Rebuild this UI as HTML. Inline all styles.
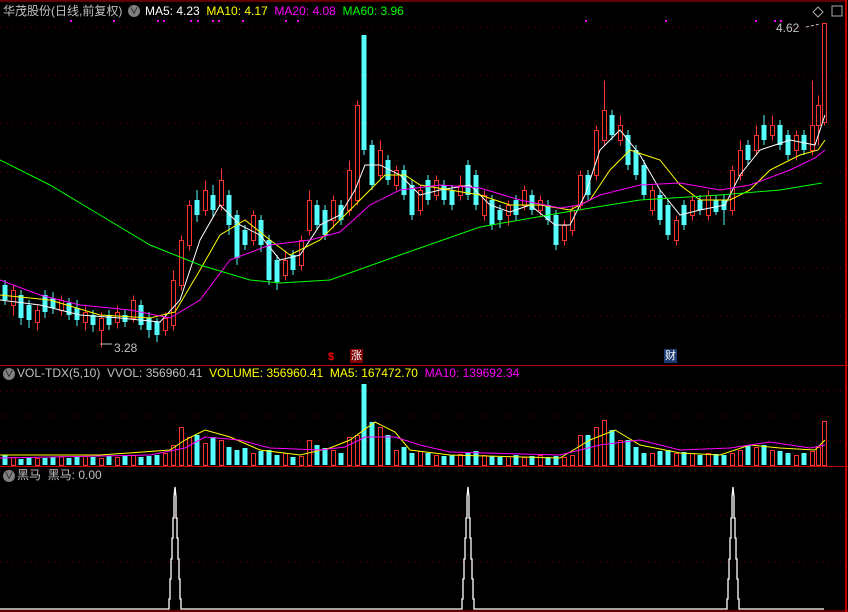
<!DOCTYPE html><html><head><meta charset="utf-8"><style>
body{margin:0;background:#000;width:848px;height:612px;overflow:hidden;font-family:"Liberation Sans","Noto Sans CJK SC",sans-serif}
svg{position:absolute;left:0;top:0}
.t{position:absolute;font-size:12px;white-space:nowrap;line-height:14px}
.b{position:absolute;width:12px;height:12px;border-radius:6px;background:#808080;color:#000;font-size:9px;text-align:center;line-height:12px}
</style></head><body>
<svg width="848" height="612" xmlns="http://www.w3.org/2000/svg">
<g stroke="#800000" stroke-dasharray="1 5">
<line x1="0" y1="27" x2="845" y2="27"/><line x1="0" y1="75" x2="845" y2="75"/><line x1="0" y1="123" x2="845" y2="123"/><line x1="0" y1="172" x2="845" y2="172"/><line x1="0" y1="220" x2="845" y2="220"/><line x1="0" y1="268" x2="845" y2="268"/><line x1="0" y1="316" x2="845" y2="316"/>
<line x1="0" y1="391" x2="845" y2="391"/><line x1="0" y1="416" x2="845" y2="416"/><line x1="0" y1="441" x2="845" y2="441"/>
<line x1="0" y1="515" x2="845" y2="515"/><line x1="0" y1="562" x2="845" y2="562"/>
</g>
<g stroke="#c00000"><line x1="0" y1="1" x2="845" y2="1"/><line x1="0" y1="365.5" x2="848" y2="365.5"/><line x1="0" y1="466.5" x2="848" y2="466.5"/><line x1="846" y1="0" x2="846" y2="612" stroke-width="2"/><line x1="0" y1="611" x2="848" y2="611"/></g>
<path fill="none" stroke="#54fcfc" d="M5 280V305M21 290V325M29 300V328M45 290V318M53 292V314M69 298V320M77 300V326M93 310V332M109 310V330M125 310V327M141 300V330M149 312V338M157 318V342M197 190V222M213 185V218M229 190V235M237 210V265M245 225V250M261 215V252M269 235V285M277 255V290M293 250V275M317 200V230M325 205V240M341 200V225M364 35V155M372 140V190M388 155V185M404 165V200M412 180V220M428 175V205M444 180V205M452 185V210M468 160V200M476 170V210M492 195V230M500 205V228M516 195V220M532 190V215M548 200V225M556 210V250M588 170V200M612 110V140M628 130V170M636 145V180M644 160V200M660 190V225M668 200V240M684 200V230M700 195V215M716 195V215M724 195V225M748 140V165M764 115V145M780 120V150M788 130V160M804 130V155"/>
<g transform="translate(0.5,0.5)">
<path fill="none" stroke="#ff3232" d="M13 285V315M37 305V330M61 295V315M85 306V330M101 312V347M117 305V328M133 295V322M165 312V335M173 270V330M181 235V290M189 200V250M205 180V215M221 168V210M253 210V245M285 250V280M301 235V270M309 190V235M333 195V228M349 160V215M357 100V205M380 140V180M396 165V190M420 185V215M436 175V200M460 175V200M484 190V220M508 200V225M524 185V210M540 195V215M564 220V245M572 205V235M580 170V210M596 125V180M604 80V145M620 115V145M652 185V215M676 215V245M692 195V220M708 190V220M732 165V215M740 140V180M756 125V155M772 115V140M796 130V160M812 80V155M818 95V145M824 23V125"/>
</g>
<g fill="#54fcfc">
<rect x="2.5" y="285" width="5" height="15"/><rect x="18.5" y="295" width="5" height="23"/><rect x="26.5" y="305" width="5" height="15"/><rect x="42.5" y="295" width="5" height="17"/><rect x="50.5" y="298" width="5" height="10"/><rect x="66.5" y="303" width="5" height="12"/><rect x="74.5" y="308" width="5" height="12"/><rect x="90.5" y="315" width="5" height="10"/><rect x="106.5" y="315" width="5" height="10"/><rect x="122.5" y="315" width="5" height="7"/><rect x="138.5" y="305" width="5" height="20"/><rect x="146.5" y="318" width="5" height="12"/><rect x="154.5" y="322" width="5" height="13"/><rect x="194.5" y="200" width="5" height="15"/><rect x="210.5" y="195" width="5" height="15"/><rect x="226.5" y="195" width="5" height="30"/><rect x="234.5" y="215" width="5" height="43"/><rect x="242.5" y="230" width="5" height="15"/><rect x="258.5" y="220" width="5" height="25"/><rect x="266.5" y="240" width="5" height="40"/><rect x="274.5" y="260" width="5" height="22"/><rect x="290.5" y="255" width="5" height="15"/><rect x="314.5" y="205" width="5" height="20"/><rect x="322.5" y="210" width="5" height="25"/><rect x="338.5" y="205" width="5" height="15"/><rect x="361.5" y="35" width="5" height="115"/><rect x="369.5" y="145" width="5" height="40"/><rect x="385.5" y="160" width="5" height="20"/><rect x="401.5" y="170" width="5" height="25"/><rect x="409.5" y="185" width="5" height="30"/><rect x="425.5" y="180" width="5" height="20"/><rect x="441.5" y="185" width="5" height="15"/><rect x="449.5" y="190" width="5" height="15"/><rect x="465.5" y="165" width="5" height="30"/><rect x="473.5" y="175" width="5" height="30"/><rect x="489.5" y="200" width="5" height="25"/><rect x="497.5" y="210" width="5" height="10"/><rect x="513.5" y="200" width="5" height="15"/><rect x="529.5" y="195" width="5" height="15"/><rect x="545.5" y="205" width="5" height="15"/><rect x="553.5" y="215" width="5" height="30"/><rect x="585.5" y="175" width="5" height="20"/><rect x="609.5" y="115" width="5" height="20"/><rect x="625.5" y="135" width="5" height="30"/><rect x="633.5" y="150" width="5" height="25"/><rect x="641.5" y="165" width="5" height="30"/><rect x="657.5" y="195" width="5" height="25"/><rect x="665.5" y="205" width="5" height="30"/><rect x="681.5" y="205" width="5" height="20"/><rect x="697.5" y="200" width="5" height="10"/><rect x="713.5" y="200" width="5" height="12"/><rect x="721.5" y="200" width="5" height="10"/><rect x="745.5" y="145" width="5" height="15"/><rect x="761.5" y="125" width="5" height="15"/><rect x="777.5" y="125" width="5" height="20"/><rect x="785.5" y="135" width="5" height="20"/><rect x="801.5" y="135" width="5" height="15"/>
</g>
<g fill="#000" stroke="#ff3232" transform="translate(0.5,0.5)">
<rect x="11" y="290" width="4" height="15"/><rect x="35" y="310" width="4" height="12"/><rect x="59" y="300" width="4" height="10"/><rect x="83" y="312" width="4" height="10"/><rect x="99" y="318" width="4" height="12"/><rect x="115" y="312" width="4" height="10"/><rect x="131" y="300" width="4" height="18"/><rect x="163" y="318" width="4" height="12"/><rect x="171" y="280" width="4" height="45"/><rect x="179" y="240" width="4" height="45"/><rect x="187" y="205" width="4" height="40"/><rect x="203" y="190" width="4" height="20"/><rect x="219" y="180" width="4" height="25"/><rect x="251" y="215" width="4" height="25"/><rect x="283" y="260" width="4" height="15"/><rect x="299" y="240" width="4" height="25"/><rect x="307" y="200" width="4" height="30"/><rect x="331" y="200" width="4" height="20"/><rect x="347" y="170" width="4" height="40"/><rect x="355" y="105" width="4" height="95"/><rect x="378" y="150" width="4" height="25"/><rect x="394" y="170" width="4" height="15"/><rect x="418" y="190" width="4" height="20"/><rect x="434" y="180" width="4" height="15"/><rect x="458" y="185" width="4" height="10"/><rect x="482" y="195" width="4" height="20"/><rect x="506" y="205" width="4" height="10"/><rect x="522" y="190" width="4" height="15"/><rect x="538" y="200" width="4" height="10"/><rect x="562" y="225" width="4" height="15"/><rect x="570" y="210" width="4" height="20"/><rect x="578" y="175" width="4" height="30"/><rect x="594" y="130" width="4" height="45"/><rect x="602" y="110" width="4" height="30"/><rect x="618" y="125" width="4" height="15"/><rect x="650" y="190" width="4" height="20"/><rect x="674" y="220" width="4" height="20"/><rect x="690" y="200" width="4" height="15"/><rect x="706" y="195" width="4" height="20"/><rect x="730" y="170" width="4" height="40"/><rect x="738" y="150" width="4" height="25"/><rect x="754" y="135" width="4" height="15"/><rect x="770" y="125" width="4" height="10"/><rect x="794" y="135" width="4" height="15"/><rect x="810" y="125" width="4" height="25"/><rect x="816" y="105" width="4" height="20"/><rect x="822" y="23" width="4" height="99"/>
</g>
<g fill="none" stroke-width="1">
<polyline stroke="#fff" points="0,300 40,305 80,315 120,318 160,322 180,300 200,240 220,205 240,225 260,235 280,260 300,255 320,225 340,215 355,190 365,165 380,165 400,175 420,195 440,190 470,185 490,205 510,212 530,205 555,225 570,225 585,195 600,150 620,130 640,155 660,190 680,215 700,210 725,205 740,175 760,150 790,140 815,145 825,115"/>
<polyline stroke="#ff0" points="0,295 50,300 100,315 150,318 175,312 200,270 220,235 245,220 270,240 290,255 320,240 345,215 365,195 385,175 405,175 420,185 450,190 480,195 510,205 540,205 570,210 590,200 610,170 630,150 660,160 680,185 700,200 730,200 750,190 770,170 800,155 818,150 825,140"/>
<polyline stroke="#f0f" points="0,280 40,295 80,305 130,310 170,318 200,300 230,260 270,245 310,240 340,232 370,205 400,190 440,185 480,188 520,200 560,208 580,205 600,195 620,190 640,185 680,183 720,190 750,185 790,170 815,158 825,150"/>
<polyline stroke="#0f0" points="0,160 50,185 100,215 150,245 200,265 250,280 280,283 330,280 400,255 480,227 560,213 640,200 720,195 780,190 822,183"/>
</g>
<g fill="#54fcfc">
<rect x="2.5" y="455" width="5" height="10"/><rect x="18.5" y="459" width="5" height="6"/><rect x="26.5" y="457" width="5" height="8"/><rect x="42.5" y="458" width="5" height="7"/><rect x="50.5" y="457" width="5" height="8"/><rect x="66.5" y="458" width="5" height="7"/><rect x="74.5" y="457" width="5" height="8"/><rect x="90.5" y="457" width="5" height="8"/><rect x="106.5" y="456" width="5" height="9"/><rect x="122.5" y="456" width="5" height="9"/><rect x="138.5" y="457" width="5" height="8"/><rect x="146.5" y="456" width="5" height="9"/><rect x="154.5" y="455" width="5" height="10"/><rect x="194.5" y="435" width="5" height="30"/><rect x="210.5" y="437" width="5" height="28"/><rect x="226.5" y="447" width="5" height="18"/><rect x="234.5" y="450" width="5" height="15"/><rect x="242.5" y="448" width="5" height="17"/><rect x="258.5" y="451" width="5" height="14"/><rect x="266.5" y="450" width="5" height="15"/><rect x="274.5" y="455" width="5" height="10"/><rect x="290.5" y="457" width="5" height="8"/><rect x="314.5" y="445" width="5" height="20"/><rect x="322.5" y="448" width="5" height="17"/><rect x="338.5" y="453" width="5" height="12"/><rect x="361.5" y="384" width="5" height="81"/><rect x="369.5" y="422" width="5" height="43"/><rect x="385.5" y="435" width="5" height="30"/><rect x="401.5" y="447" width="5" height="18"/><rect x="409.5" y="453" width="5" height="12"/><rect x="425.5" y="453" width="5" height="12"/><rect x="441.5" y="456" width="5" height="9"/><rect x="449.5" y="455" width="5" height="10"/><rect x="465.5" y="453" width="5" height="12"/><rect x="473.5" y="451" width="5" height="14"/><rect x="489.5" y="456" width="5" height="9"/><rect x="497.5" y="457" width="5" height="8"/><rect x="513.5" y="455" width="5" height="10"/><rect x="529.5" y="456" width="5" height="9"/><rect x="545.5" y="457" width="5" height="8"/><rect x="553.5" y="456" width="5" height="9"/><rect x="585.5" y="435" width="5" height="30"/><rect x="609.5" y="430" width="5" height="35"/><rect x="625.5" y="440" width="5" height="25"/><rect x="633.5" y="447" width="5" height="18"/><rect x="641.5" y="453" width="5" height="12"/><rect x="657.5" y="451" width="5" height="14"/><rect x="665.5" y="450" width="5" height="15"/><rect x="681.5" y="452" width="5" height="13"/><rect x="697.5" y="455" width="5" height="10"/><rect x="713.5" y="454" width="5" height="11"/><rect x="721.5" y="455" width="5" height="10"/><rect x="745.5" y="445" width="5" height="20"/><rect x="761.5" y="445" width="5" height="20"/><rect x="777.5" y="451" width="5" height="14"/><rect x="785.5" y="453" width="5" height="12"/><rect x="801.5" y="453" width="5" height="12"/>
</g>
<g fill="#000" stroke="#ff3232" transform="translate(0.5,0.5)">
<rect x="11" y="457" width="4" height="8"/><rect x="35" y="458" width="4" height="7"/><rect x="59" y="456" width="4" height="9"/><rect x="83" y="456" width="4" height="9"/><rect x="99" y="458" width="4" height="7"/><rect x="115" y="457" width="4" height="8"/><rect x="131" y="455" width="4" height="10"/><rect x="163" y="453" width="4" height="12"/><rect x="171" y="445" width="4" height="20"/><rect x="179" y="427" width="4" height="38"/><rect x="187" y="437" width="4" height="28"/><rect x="203" y="443" width="4" height="22"/><rect x="219" y="440" width="4" height="25"/><rect x="251" y="453" width="4" height="12"/><rect x="283" y="453" width="4" height="12"/><rect x="299" y="456" width="4" height="9"/><rect x="307" y="440" width="4" height="25"/><rect x="331" y="450" width="4" height="15"/><rect x="347" y="437" width="4" height="28"/><rect x="355" y="435" width="4" height="30"/><rect x="378" y="427" width="4" height="38"/><rect x="394" y="450" width="4" height="15"/><rect x="418" y="451" width="4" height="14"/><rect x="434" y="455" width="4" height="10"/><rect x="458" y="454" width="4" height="11"/><rect x="482" y="455" width="4" height="10"/><rect x="506" y="456" width="4" height="9"/><rect x="522" y="457" width="4" height="8"/><rect x="538" y="455" width="4" height="10"/><rect x="562" y="457" width="4" height="8"/><rect x="570" y="455" width="4" height="10"/><rect x="578" y="435" width="4" height="30"/><rect x="594" y="427" width="4" height="38"/><rect x="602" y="420" width="4" height="45"/><rect x="618" y="440" width="4" height="25"/><rect x="650" y="453" width="4" height="12"/><rect x="674" y="453" width="4" height="12"/><rect x="690" y="453" width="4" height="12"/><rect x="706" y="453" width="4" height="12"/><rect x="730" y="453" width="4" height="12"/><rect x="738" y="450" width="4" height="15"/><rect x="754" y="447" width="4" height="18"/><rect x="770" y="450" width="4" height="15"/><rect x="794" y="455" width="4" height="10"/><rect x="810" y="451" width="4" height="14"/><rect x="816" y="447" width="4" height="18"/><rect x="822" y="421" width="4" height="44"/>
</g>
<polyline fill="none" stroke="#ff0" points="0,455 100,455 170,450 185,440 205,430 230,437 260,450 300,455 330,448 350,440 375,422 395,432 410,450 450,455 560,458 590,440 615,430 640,445 680,453 720,455 750,445 780,448 815,450 825,440"/>
<polyline fill="none" stroke="#f0f" points="0,458 150,455 185,448 205,437 240,440 270,448 320,450 345,447 365,437 395,437 420,445 450,452 560,455 600,445 640,440 680,450 730,448 770,442 810,448 825,445"/>
<polyline fill="none" stroke="#fff" stroke-width="1.3" points="0,609 169,609 169,599 170,599 170,579 171,579 171,559 172,559 172,538 173,538 173,518 174,518 174,497 175,487 176,497 176,518 177,518 177,538 178,538 178,559 179,559 179,579 180,579 180,599 181,599 181,609 462,609 462,599 463,599 463,579 464,579 464,559 465,559 465,538 466,538 466,518 467,518 467,497 468,487 469,497 469,518 470,518 470,538 471,538 471,559 472,559 472,579 473,579 473,599 474,599 474,609 727,609 727,599 728,599 728,579 729,579 729,559 730,559 730,538 731,538 731,518 732,518 732,497 733,487 734,497 734,518 735,518 735,538 736,538 736,559 737,559 737,579 738,579 738,599 739,599 739,609 824,609"/>
<line x1="100" y1="344" x2="112" y2="344" stroke="#c0c0c0"/><line x1="806" y1="27" x2="820" y2="24" stroke="#c0c0c0" stroke-dasharray="3 2"/>
<g fill="#f0f"><rect x="70" y="20" width="2" height="2"/><rect x="113" y="20" width="2" height="2"/><rect x="157" y="20" width="2" height="2"/><rect x="163" y="20" width="2" height="2"/><rect x="190" y="20" width="2" height="2"/><rect x="197" y="20" width="2" height="2"/><rect x="212" y="20" width="2" height="2"/><rect x="218" y="20" width="2" height="2"/><rect x="242" y="20" width="2" height="2"/><rect x="285" y="20" width="2" height="2"/><rect x="297" y="20" width="2" height="2"/><rect x="585" y="20" width="2" height="2"/><rect x="665" y="20" width="2" height="2"/><rect x="755" y="20" width="2" height="2"/><rect x="774" y="20" width="2" height="2"/><rect x="780" y="20" width="2" height="2"/></g>
<path d="M818 7 l5 5 -5 5 -5 -5z" fill="none" stroke="#aaa"/><rect x="832" y="6" width="10" height="10" fill="none" stroke="#aaa"/>
</svg>
<div class="t" style="left:3px;top:4px;color:#c0c0c0">华茂股份(日线,前复权)</div>
<div class="b" style="left:128px;top:5px">∨</div>
<div class="t" style="left:145px;top:4px"><span style="color:#fff">MA5: 4.23</span>&nbsp; <span style="color:#ff0">MA10: 4.17</span>&nbsp; <span style="color:#f0f">MA20: 4.08</span>&nbsp; <span style="color:#0f0">MA60: 3.96</span></div>
<div class="b" style="left:3px;top:368px">∨</div>
<div class="t" style="left:17px;top:366px;color:#c0c0c0">VOL-TDX(5,10) &nbsp;VVOL: 356960.41 &nbsp;<span style="color:#ff0">VOLUME: 356960.41 &nbsp;MA5: 167472.70</span> &nbsp;<span style="color:#f0f">MA10: 139692.34</span></div>
<div class="b" style="left:3px;top:470px">∨</div>
<div class="t" style="left:17px;top:468px;color:#c0c0c0">黑马 &nbsp;黑马: 0.00</div>
<div class="t" style="left:114px;top:341px;color:#c0c0c0">3.28</div>
<div class="t" style="left:776px;top:21px;color:#c0c0c0">4.62</div>
<div class="t" style="left:328px;top:350px;color:#f00;font-size:11px;font-weight:bold">$</div>
<div class="t" style="left:350px;top:349px;background:#800000;color:#fff;font-size:11px;padding:0 1px">涨</div>
<div class="t" style="left:664px;top:349px;background:#1a3a70;color:#fff;font-size:11px;padding:0 1px">财</div>
</body></html>
